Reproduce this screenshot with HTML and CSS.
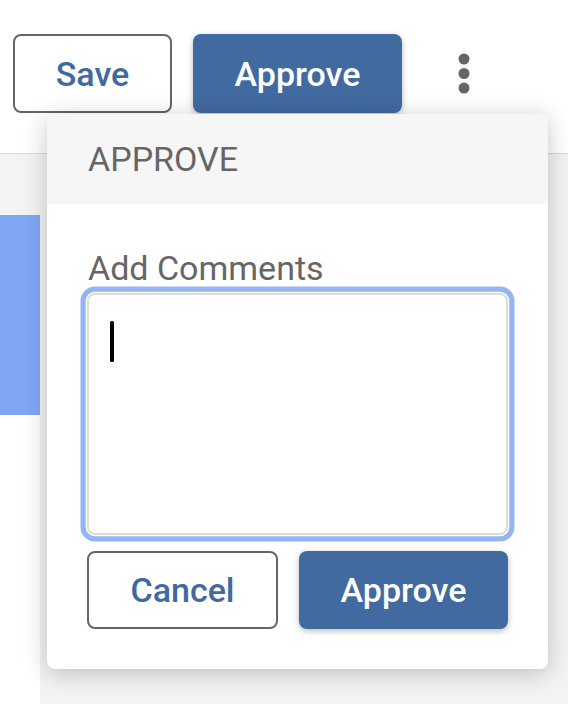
FILE: index.html
```html
<!DOCTYPE html>
<html lang="en">
<head>
<meta charset="utf-8">
<title>Approve</title>
<link rel="stylesheet" href="styles.css">
</head>
<body>
<div class="page">
  <header class="topbar">
    <div class="toolbar">
      <button class="btn btn-outline btn-save">Save</button>
      <button class="btn btn-primary btn-approve-top">Approve</button>
      <button class="kebab" aria-label="More">
        <svg width="12" height="42" viewBox="0 0 12 42">
          <circle cx="6" cy="6" r="5.5" fill="#666"/>
          <circle cx="6" cy="20.5" r="5.5" fill="#666"/>
          <circle cx="6" cy="35" r="5.5" fill="#666"/>
        </svg>
      </button>
    </div>
  </header>
  <div class="workspace">
    <nav class="sidebar">
      <div class="sidebar-gap"></div>
      <div class="nav-item-active"></div>
      <div class="sidebar-rest"></div>
    </nav>
    <main class="main"></main>
  </div>

  <div class="popup">
    <div class="popup-header">APPROVE</div>
    <div class="popup-body">
      <label class="field-label">Add Comments</label>
      <div class="textbox" role="textbox"><span class="caret"></span></div>
      <div class="actions">
        <button class="btn btn-outline btn-cancel">Cancel</button>
        <button class="btn btn-primary btn-approve">Approve</button>
      </div>
    </div>
  </div>
</div>
</body>
</html>
```

FILE: styles.css
```css
* { box-sizing: border-box; }

html, body {
  margin: 0;
  padding: 0;
  width: 568px;
  height: 704px;
  overflow: hidden;
  background: #ffffff;
  font-family: Roboto, "Liberation Sans", sans-serif;
}

.page {
  position: relative;
  width: 568px;
  height: 704px;
  display: flex;
  flex-direction: column;
}

.topbar {
  height: 154px;
  background: #ffffff;
  border-bottom: 1px solid #d6d6d6;
  flex: none;
}

.toolbar {
  display: flex;
  align-items: flex-start;
  gap: 21px;
  padding: 34px 0 0 13px;
}

.btn {
  font-family: Roboto, "Liberation Sans", sans-serif;
  font-size: 34px;
  font-weight: 500;
  line-height: 40px;
  border-radius: 8px;
  padding: 0;
  display: flex;
  align-items: center;
  justify-content: center;
  cursor: pointer;
}

.btn-outline {
  background: #ffffff;
  color: #4169a0;
  border: 2px solid #666666;
}

.btn-primary {
  background: #416aa0;
  color: #ffffff;
  border: none;
  box-shadow: 0 2px 6px rgba(0, 0, 0, 0.28);
}

.btn-save { width: 159px; height: 79px; }
.btn-approve-top { width: 209px; height: 79px; }

.kebab {
  margin-left: 21px;
  width: 40px;
  height: 79px;
  background: none;
  border: none;
  padding: 0;
  display: flex;
  align-items: center;
  justify-content: center;
}

.workspace {
  flex: 1;
  display: flex;
}

.sidebar {
  width: 40px;
  display: flex;
  flex-direction: column;
}

.sidebar-gap {
  height: 61px;
  background: #f3f3f3;
}

.nav-item-active {
  height: 200px;
  background: #7fa7f3;
}

.sidebar-rest {
  flex: 1;
  background: #ffffff;
}

.main {
  flex: 1;
  background: #f3f3f3;
}

.popup {
  position: absolute;
  left: 47px;
  top: 114px;
  width: 501px;
  background: #ffffff;
  border-radius: 0 0 8px 8px;
  box-shadow: 0 4px 24px rgba(0, 0, 0, 0.22);
}

.popup-header {
  height: 90px;
  background: #f6f6f6;
  padding: 0 41px;
  display: flex;
  align-items: center;
  font-size: 34px;
  line-height: 40px;
  color: #666666;
  font-weight: 400;
}

.popup-body {
  padding: 44px 40px 40px;
}

.field-label {
  display: block;
  font-size: 34px;
  line-height: 40px;
  color: #666666;
  padding-left: 1px;
}

.textbox {
  margin-top: 5px;
  height: 242px;
  border: 2px solid #dcdcdc;
  border-radius: 8px;
  background: #ffffff;
  box-shadow: 0 0 0 1.3px #ffffff, 0 0 0 6.5px #94b4f4;
  padding: 26px 0 0 21px;
}

.caret {
  display: block;
  width: 3.5px;
  height: 41px;
  background: #000000;
  border-radius: 1.5px;
}

.actions {
  margin-top: 16px;
  display: flex;
  gap: 21px;
}

.btn-cancel { width: 191px; height: 78px; }
.btn-approve { width: 209px; height: 78px; }
```
